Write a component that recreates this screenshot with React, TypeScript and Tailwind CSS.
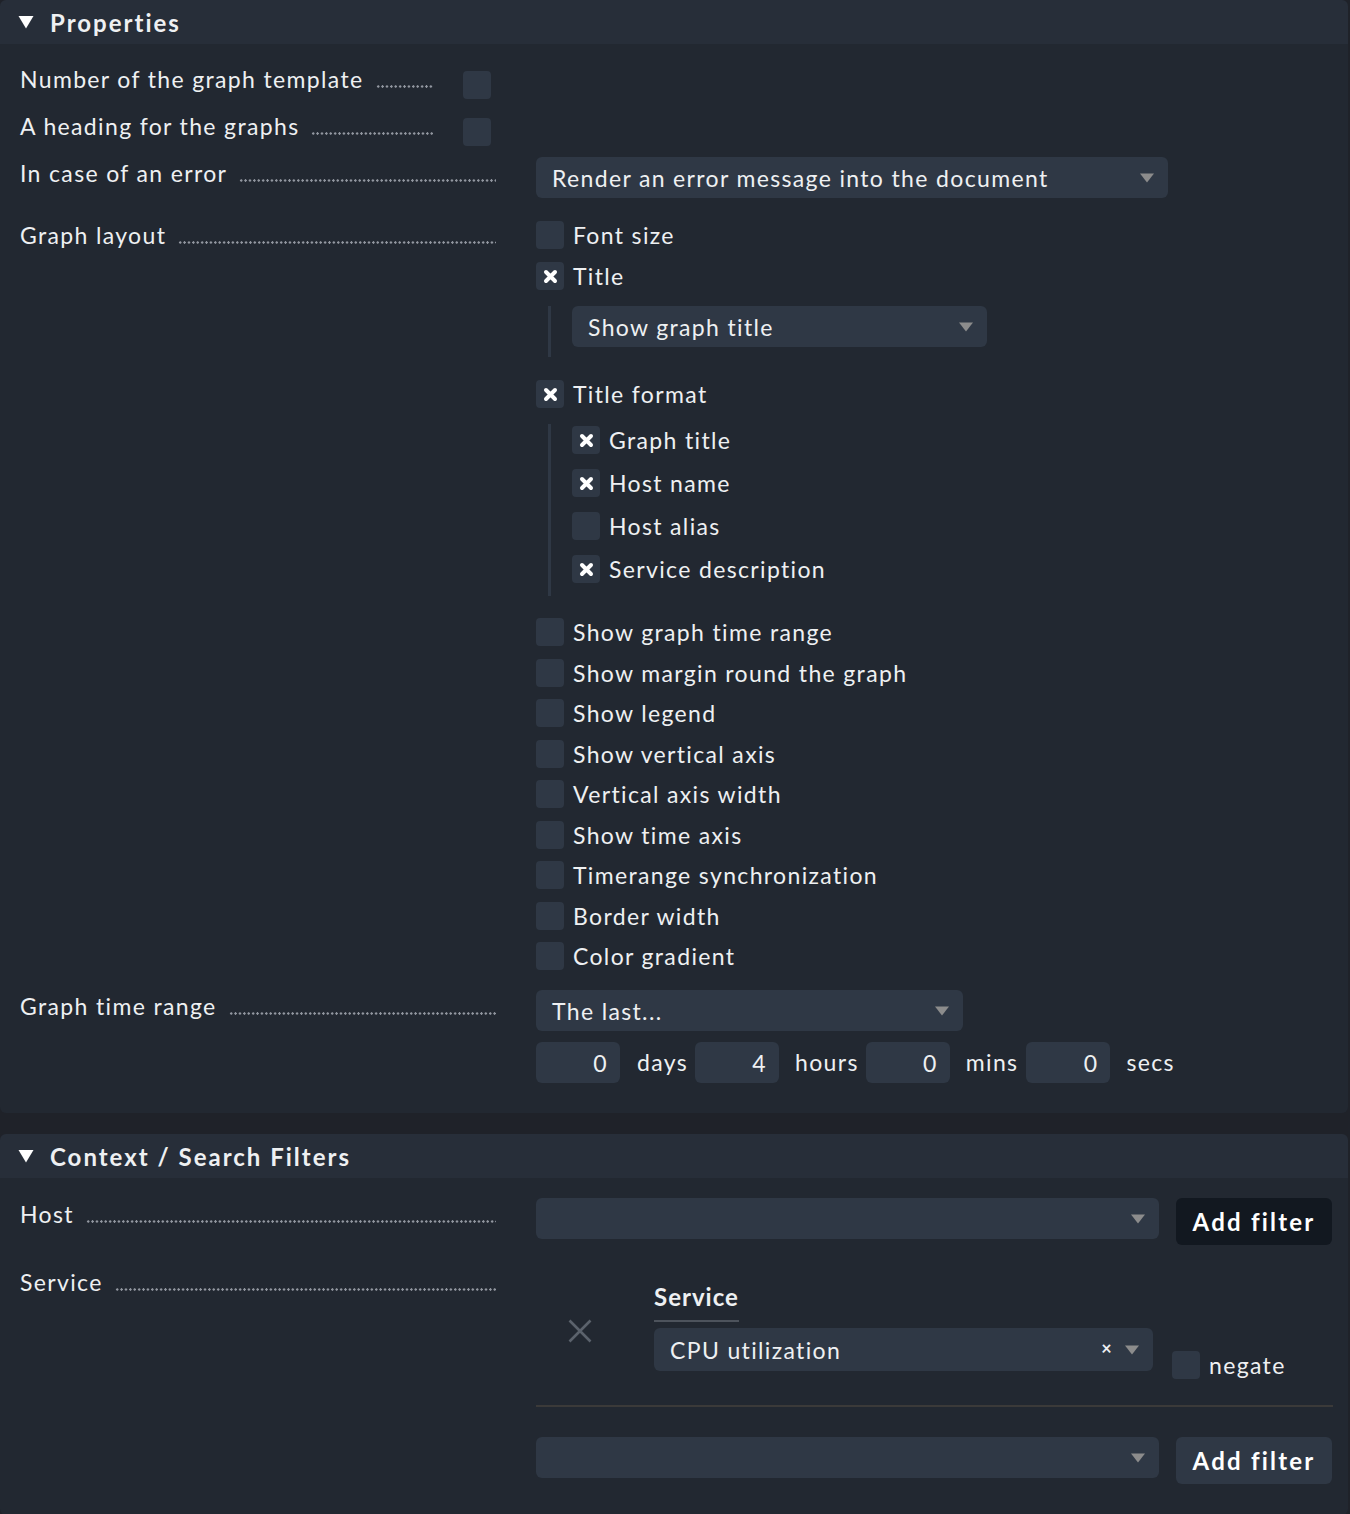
import React from "react";

const XMark = ({ size = 15 }: { size?: number }) => (
  <svg width={size} height={size} viewBox="0 0 15 15">
    <path d="M3 3 L12 12 M12 3 L3 12" stroke="#ffffff" strokeWidth="4" strokeLinecap="round" />
  </svg>
);

const Arrow = () => (
  <svg width="16" height="10" viewBox="0 0 16 10" className="shrink-0">
    <path d="M1 0.5 H15 L8 9.5 Z" fill="#8c8c8c" />
  </svg>
);

const Box = ({ checked = false }: { checked?: boolean }) => (
  <span className="w-[28px] h-[28px] rounded-[4px] bg-[#2f3845] flex items-center justify-center shrink-0">
    {checked && <XMark />}
  </span>
);

const Check = ({ label, checked = false }: { label: string; checked?: boolean }) => (
  <div className="flex items-center gap-[9px] h-[28px]">
    <Box checked={checked} />
    <span className="leading-[28px]">{label}</span>
  </div>
);

const Dots = () => (
  <span className="flex-1 ml-[12px] mt-[20px] h-[3px] self-start bg-[radial-gradient(circle,#9297a0_1px,transparent_1.4px)] bg-[length:4.4px_3px] bg-repeat-x" />
);

const Label = ({ text, width = "w-[476px]", top = "" }: { text: string; width?: string; top?: string }) => (
  <div className={`flex ml-[20px] shrink-0 ${width} ${top}`}>
    <span className="leading-[28px] whitespace-nowrap">{text}</span>
    <Dots />
  </div>
);

const Select = ({ text, className }: { text: string; className: string }) => (
  <div className={`h-[41px] rounded-[6px] bg-[#2f3845] pl-[16px] pr-[13px] flex items-center justify-between ${className}`}>
    <span className="leading-[28px] mt-[1px] whitespace-nowrap">{text}</span>
    <Arrow />
  </div>
);

const Header = ({ title }: { title: string }) => (
  <div className="h-[44px] bg-[#272e39] rounded-t-[6px] flex items-center pl-[18px] gap-[16px]">
    <svg width="16" height="14" viewBox="0 0 16 14">
      <path d="M0.5 1 H15.5 L8 13.5 Z" fill="#ffffff" />
    </svg>
    <span className="font-bold text-[24px] tracking-[2px] mt-[1px]">{title}</span>
  </div>
);

const TimeInput = ({ value }: { value: string }) => (
  <div className="w-[84px] h-[41px] rounded-[6px] bg-[#2f3845] flex items-center justify-end pr-[12px]">
    <span className="leading-[28px]">{value}</span>
  </div>
);

export default function App() {
  return (
    <div className="min-h-[1514px] bg-[#1f2229] font-['Lato',sans-serif] text-[23px] tracking-[1.35px] text-[#eef0f2]">
      <div className="w-[1348px]">
        {/* Properties */}
        <section>
          <Header title="Properties" />
          <div className="bg-[#222831] rounded-b-[6px] pt-[21px] pb-[30px]">
            <div className="flex items-start">
              <Label text="Number of the graph template" width="w-[414px]" />
              <div className="ml-[29px] mt-[6px]"><Box /></div>
            </div>
            <div className="flex items-start mt-[13px]">
              <Label text="A heading for the graphs" width="w-[414px]" />
              <div className="ml-[29px] mt-[6px]"><Box /></div>
            </div>
            <div className="flex items-start mt-[11px]">
              <Label text="In case of an error" top="mt-[2px]" />
              <div className="ml-[40px]">
                <Select text="Render an error message into the document" className="w-[632px]" />
              </div>
            </div>

            <div className="flex items-start mt-[23px]">
              <Label text="Graph layout" />
              <div className="ml-[40px] flex flex-col">
                <Check label="Font size" />
                <div className="mt-[13px]"><Check label="Title" checked /></div>
                <div className="mt-[16px] ml-[12px] border-l-[3px] border-[#2f3845] pl-[21px] pb-[10px]">
                  <Select text="Show graph title" className="w-[415px]" />
                </div>
                <div className="mt-[23px]"><Check label="Title format" checked /></div>
                <div className="mt-[16px] ml-[12px] border-l-[3px] border-[#2f3845] pl-[21px] pt-[2px] pb-[13px] flex flex-col gap-[15px]">
                  <Check label="Graph title" checked />
                  <Check label="Host name" checked />
                  <Check label="Host alias" />
                  <Check label="Service description" checked />
                </div>
                <div className="mt-[22px] flex flex-col gap-[12.5px]">
                  <Check label="Show graph time range" />
                  <Check label="Show margin round the graph" />
                  <Check label="Show legend" />
                  <Check label="Show vertical axis" />
                  <Check label="Vertical axis width" />
                  <Check label="Show time axis" />
                  <Check label="Timerange synchronization" />
                  <Check label="Border width" />
                  <Check label="Color gradient" />
                </div>
              </div>
            </div>

            <div className="flex items-start mt-[20px]">
              <Label text="Graph time range" top="mt-[2px]" />
              <div className="ml-[40px] flex flex-col">
                <Select text="The last..." className="w-[427px]" />
                <div className="mt-[11px] flex items-center">
                  <TimeInput value="0" />
                  <span className="ml-[17px] mr-[7px]">days</span>
                  <TimeInput value="4" />
                  <span className="ml-[16px] mr-[7px]">hours</span>
                  <TimeInput value="0" />
                  <span className="ml-[16px] mr-[8px]">mins</span>
                  <TimeInput value="0" />
                  <span className="ml-[16px]">secs</span>
                </div>
              </div>
            </div>
          </div>
        </section>

        {/* Context / Search Filters */}
        <section className="mt-[21px]">
          <Header title="Context / Search Filters" />
          <div className="bg-[#222831] rounded-b-[6px] pt-[20px] pb-[31px]">
            <div className="flex items-start">
              <Label text="Host" top="mt-[2px]" />
              <div className="ml-[40px] flex items-start">
                <Select text="" className="w-[623px]" />
                <button className="ml-[17px] w-[156px] h-[47px] rounded-[6px] bg-[#121820] font-bold text-[24px] tracking-[2.2px] text-white">
                  Add filter
                </button>
              </div>
            </div>

            <div className="flex items-start mt-[23px]">
              <Label text="Service" />
              <div className="ml-[40px] w-[797px] flex flex-col">
                <div className="flex items-start">
                  <div className="w-[118px] shrink-0 pl-[32px] pt-[51px]">
                    <svg width="24" height="24" viewBox="0 0 24 24" className="block">
                      <path d="M1.5 1.5 L22.5 22.5 M22.5 1.5 L1.5 22.5" stroke="#5b626c" strokeWidth="2.6" />
                    </svg>
                  </div>
                  <div className="flex flex-col pt-[15px]">
                    <span className="self-start font-bold text-[24px] leading-[28px] pb-[9px] border-b-2 border-[#4d535c] tracking-[1px]">
                      Service
                    </span>
                    <div className="mt-[6px] w-[499px] h-[43px] rounded-[6px] bg-[#2f3845] pl-[16px] pr-[13px] flex items-center">
                      <span className="leading-[28px] flex-1">CPU utilization</span>
                      <span className="text-[18px] font-bold mr-[11px] mt-[-3px]">×</span>
                      <Arrow />
                    </div>
                  </div>
                  <div className="ml-[19px] mt-[83px] flex items-center gap-[9px]">
                    <Box />
                    <span className="leading-[28px]">negate</span>
                  </div>
                </div>
                <div className="mt-[26px] h-[2px] bg-[#3b3a39]" />
                <div className="mt-[30px] flex items-start">
                  <Select text="" className="w-[623px]" />
                  <button className="ml-[17px] w-[156px] h-[47px] rounded-[6px] bg-[#2f3845] font-bold text-[24px] tracking-[2.2px] text-white">
                    Add filter
                  </button>
                </div>
              </div>
            </div>
          </div>
        </section>
      </div>
    </div>
  );
}
